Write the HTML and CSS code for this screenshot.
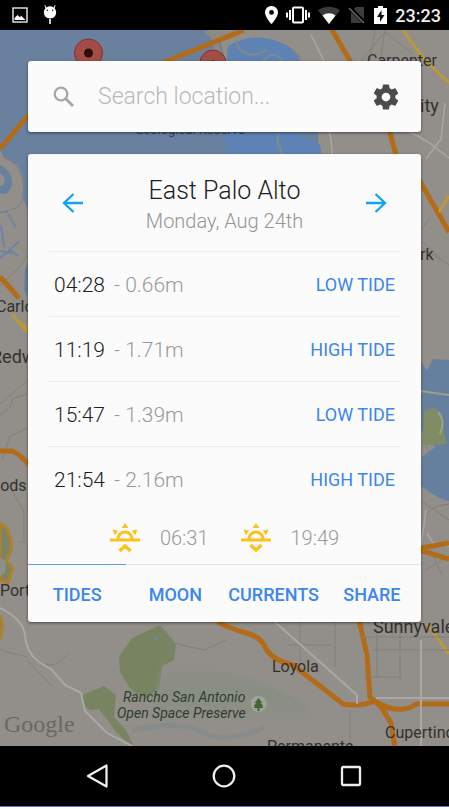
FILE: index.html
```html
<!DOCTYPE html>
<html lang="en">
<head>
<meta charset="utf-8">
<meta name="viewport" content="width=device-width, initial-scale=1">
<title>Tides</title>
<link rel="stylesheet" href="styles.css">
</head>
<body>
<header class="status">
  <div class="status-group status-left">
    <svg width="16" height="16" viewBox="0 0 16 16"><path d="M1 1h14v14H1z" fill="none" stroke="#ddd" stroke-width="1.5"/><path d="M2.500 13v-2l3-3 2 2 2-1 4 4z" fill="#fff"/></svg>
    <svg width="16" height="20" viewBox="0 0 16 20"><path d="M3 0l1.500 2.500a6 6 0 0 1 7 0L13 0l.6.400L12.500 3.300c3.500 4 1 10.200-4.500 10.200S0 7.300 3.500 3.300L2.400.400zM7.200 14h1.600v5H7.200z" fill="#fff"/><circle cx="5.300" cy="5.200" r=".7"/><circle cx="10.700" cy="5.200" r=".7"/></svg>
  </div>
  <div class="status-group status-right">
    <svg width="13" height="18" viewBox="0 0 13 18"><path fill="#fff" fill-rule="evenodd" d="M6.500 0A6.400 6.400 0 0 0 0 6.400C0 11 6.500 18 6.500 18S13 11 13 6.400A6.400 6.400 0 0 0 6.500 0zm0 4a2.400 2.400 0 1 1 0 4.800 2.400 2.400 0 0 1 0-4.800z"/></svg>
    <svg width="24" height="18" viewBox="0 0 24 18" fill="none" stroke="#fff" stroke-width="2"><rect x="7" y="1.500" width="10" height="15" rx="1"/><path d="M4 4v10M20 4v10M1 6.500v5M23 6.500v5"/></svg>
    <svg width="22" height="18" viewBox="0 0 22 18"><path d="M11 18L0 4.500C6-.5 16-.5 22 4.500z" fill="#3a3a3a"/><path d="M11 18L4.500 9.500c4-3 9-3 13 0z" fill="#fff"/></svg>
    <svg width="18" height="18" viewBox="0 0 18 18"><path d="M8 1h8v16H3V6z" fill="#3c3c3c"/><path d="M1 1l16 16" stroke="#000" stroke-width="4"/><path d="M1 2l15 15" stroke="#666" stroke-width="1.500"/></svg>
    <svg width="13" height="18" viewBox="0 0 13 18"><path d="M0 2h4V0h5v2h4v16H0z" fill="#fff"/><path d="M7.500 4L3 11h3v5l4.500-7h-3z" fill="#111"/></svg>
    <time class="clock">23:23</time>
  </div>
</header>

<main class="stage">
  <svg class="map" viewBox="0 30 449 716" preserveAspectRatio="xMidYMid slice" aria-hidden="true">
    <defs>
      <linearGradient id="hill" x1="0" y1="0" x2="0" y2="1"><stop offset="0" stop-color="#7f8f80" stop-opacity="0"/><stop offset=".5" stop-color="#7f8f80" stop-opacity=".5"/><stop offset="1" stop-color="#7f8f80" stop-opacity="0"/></linearGradient>
    </defs>
    <rect y="30" width="449" height="716" fill="#928e89"/>
    <path fill="#69809f" d="M0 30h207l13 10 8 32v60h90v24H28v54l-6-14q4-22-6-32L4 158l-4-8z"/>
    <path fill="#5f82b4" d="M228 46q20-12 42-7 32 8 30 28H226zM226 132h64l30 12 2 14H226z"/>
    <path fill="none" stroke="#7d8c8b" stroke-width="2" d="M236 40q2 12 12 14t18-4M262 62q12-14 20-1M278 134v10l5 12"/>
    <path fill="#8d8b7f" d="M204 31h34l-10 9-10 2 5 14-8 2-3-18z"/>
    <path fill="#68809f" d="M0 165q13 6 12 20-4 12-12 8v-7q7-2 4-9l-4-4zM28 262v36l-4-8 1-20z"/>
    <g fill="none" stroke="#6b84a8" stroke-width="2"><path d="M0 212h8M1 225l3 22M8 214l8 14M0 258l10-8 9-9M0 251l13 2M10 250l8 6"/></g>
    <g fill="none" stroke="#827f7a"><path d="M4 156q19 12 20 30t-8 22l-14 4M0 285l20-18 8-13M0 404l28-24M0 415q14-8 12-16l15-5M2 460l8-24 18-8M12 490l12 22v30h-5M290 50l12 8M360 62l25-30 28 22M370 60l5-30M380 62l5-32M420 210q-8 20-2 28l22 20M430 218l-18 24M418 245l31 20M420 500l29 20M423 440l16 34 10 6M425 570l24-14M430 550l12 25M425 520q0-14 24-16"/></g>
    <g fill="none" stroke="#aaa7a3" stroke-width="1.500"><path d="M311 35l13 26M330 132l3 28M390 120l38 22 21 16M445 103l-4 36-15 20M449 546l-16-3-6-10M415 590l11-80M420 500l-3 70"/></g>
    <path fill="none" stroke="#b36b17" stroke-width="5" d="M150 68l94-38M31 112L0 149M331 28l22 38M389 130l8 28M418 178l31 54M0 277l19 21M0 451h12q10 4 19 17"/>
    <path fill="none" stroke="#b36b17" stroke-width="5" d="M449 543l-33 6 33 10M218 622q8 5 28 11 16 4 20 16 8 12 27 16l50 39q18 3 31-3l15 7q18 4 27-4h40l8 2M359 620l8 35 3 42 11 10 10 16 4 25"/>
    <path fill="none" stroke="#ba9a38" stroke-width="3" d="M403 30l20 28 26 25M449 196l-10 16M12 314l15 18M16 320l12 8M427 624l22 30"/>
    <path fill="#65809e" d="M421 361l6 10 6-12 16 1v86l-12 3-17-20z"/>
    <path fill="#7f8c65" d="M424 412q12-10 18 5l4 27-24 1z"/>
    <path fill="none" stroke="#9ba185" stroke-width="2" d="M420 391l29 4M438 412q8 9 2 22M421 482q9-14 15-3l13 19"/>
    <path fill="#65809e" d="M422 457l16-12 11 1v55l-10-3-18-12z"/>
    <path fill="#7c8368" stroke="#ac8326" stroke-width="3" d="M0 523q13 8 11 28l-5 10 7 7-5 15-8-3zM0 615l3 10-3 14"/>
    <path fill="#8f8e88" d="M0 558l6 3-1 12-5 3z"/>
    <path fill="#788461" d="M132 638l28-13 7 8 9 12-2 15-12 6-3 22-12 10q-12-4-17-10l-10-16-1-15zM83 695l21-9 12 9-2 22 12 13 8 16q-15-8-25-24l-10-13-9 1-8-5z"/>
    <circle cx="156" cy="638" r="2" fill="#6986a2"/>
    <path fill="url(#hill)" d="M160 660q50 0 105 24t45 35q-50 12-160 2z"/>
    <path fill="none" stroke="#827f7a" d="M0 650l27 7M45 664q10 5 23-10M27 660l25 26M162 630l15 14 27 6 22-10M300 622v42M335 622v46M287 645h45M364 677h38M377 620v58M400 620v60M360 637h89M373 650h76M350 710v36"/>
    <path fill="none" stroke="#aaa8a4" stroke-width="2" d="M0 608q24 12 25 28t14 26l13 8 13 15 16 8 4 18 22 22 27 14M275 622l82 73v9M376 698h73M421 640v106"/>
    <path fill="none" stroke="#78878a" opacity=".4" stroke-width="5" d="M132 730q50-10 70 2t62-4"/>
    <g stroke="#82322b" fill="#a44c46"><circle cx="88.500" cy="53" r="14"/><circle cx="213" cy="63" r="13"/></g>
    <circle cx="88.500" cy="53" r="4.500" fill="#2c0d0c"/><circle cx="213" cy="62" r="2" fill="#6c241f"/>
    <g class="place">
      <text x="367" y="66">Carpenter</text>
      <text x="420" y="112" class="place-city">ity</text>
      <text x="136" y="134" class="place-small">Ecological Reserve</text>
      <text x="420" y="260">rk</text>
      <text x="-4" y="312">Carlo</text>
      <text x="-9" y="363" class="place-city">Redw</text>
      <text x="-9" y="491">oods</text>
      <text x="0" y="596">Port</text>
      <text x="373" y="633" class="place-city">Sunnyvale</text>
      <text x="272" y="672">Loyola</text>
      <text x="385" y="738">Cupertino</text>
      <text x="267" y="752">Permanente</text>
    </g>
    <g class="park"><text x="123" y="702">Rancho San Antonio</text><text x="117" y="718">Open Space Preserve</text></g>
    <circle cx="258.500" cy="704" r="8" fill="#a0a39a"/>
    <path fill="#456434" d="M258.500 698l4 5h-2l3 3h-2l2 2h-4v3h-2v-3h-4l2-2h-2l3-3h-2z"/>
    <text x="4" y="732" class="brand">Google</text>
  </svg>

  <div class="panels">
    <form class="card search">
      <label class="search-label" for="location" aria-label="Search location"><svg width="22" height="22" viewBox="0 0 22 22" fill="none" stroke="#a6a6a6"><circle cx="8" cy="8" r="6.300" stroke-width="2.300"/><path d="M12.500 12.500l7.500 7.500" stroke-width="2.800"/></svg></label>
      <input id="location" class="search-input" type="text" placeholder="Search location...">
      <button class="icon-button" type="button" aria-label="Settings"><svg width="30" height="30" viewBox="0 0 24 24"><path fill="#4b4b4b" d="M19.430 12.980c.04-.32.07-.64.07-.98s-.03-.66-.07-.98l2.110-1.650c.19-.15.24-.42.12-.64l-2-3.460c-.12-.22-.39-.3-.61-.22l-2.490 1c-.52-.4-1.080-.73-1.690-.98l-.38-2.650A.488.488 0 0 0 14 2h-4c-.25 0-.46.18-.49.42l-.38 2.650c-.61.25-1.170.59-1.690.98l-2.490-1c-.23-.09-.49 0-.61.22l-2 3.460c-.13.22-.07.49.12.64l2.110 1.650c-.04.32-.07.65-.07.98s.03.66.07.98l-2.110 1.650c-.19.15-.24.42-.12.64l2 3.460c.12.22.39.3.61.22l2.490-1c.52.4 1.080.73 1.690.98l.38 2.650c.03.24.24.42.49.42h4c.25 0 .46-.18.49-.42l.38-2.650c.61-.25 1.170-.59 1.690-.98l2.490 1c.23.09.49 0 .61-.22l2-3.460c.12-.22.07-.49-.12-.64l-2.110-1.650zM12 15.500a3.500 3.500 0 1 1 0-7 3.500 3.500 0 0 1 0 7z"/></svg></button>
    </form>

    <section class="card tides">
      <header class="place-header">
        <button class="icon-button" type="button" aria-label="Previous day"><svg width="22" height="20" viewBox="0 0 22 20" fill="none" stroke="#0da5f2" stroke-width="2.300"><path d="M21 10H2M11.500 1L2 10l9.500 9"/></svg></button>
        <div class="heading">
          <h1>East Palo Alto</h1>
          <p>Monday, Aug 24th</p>
        </div>
        <button class="icon-button" type="button" aria-label="Next day"><svg width="22" height="20" viewBox="0 0 22 20" fill="none" stroke="#0da5f2" stroke-width="2.300"><path d="M1 10h19M10.500 1l9.500 9-9.500 9"/></svg></button>
      </header>
      <ul class="tide-list">
        <li><time>04:28</time><span class="height">- 0.66m</span><span class="kind">LOW TIDE</span></li>
        <li><time>11:19</time><span class="height">- 1.71m</span><span class="kind">HIGH TIDE</span></li>
        <li><time>15:47</time><span class="height">- 1.39m</span><span class="kind">LOW TIDE</span></li>
        <li><time>21:54</time><span class="height">- 2.16m</span><span class="kind">HIGH TIDE</span></li>
      </ul>
      <div class="sun">
        <svg width="30" height="30" viewBox="0 0 30 30"><g fill="#fcc21b"><path d="M15 0l3.500 5h-7zM2.500 6.500l5.500 1-3 5zM27.500 6.500l-5.500 1 3 5z"/></g><g fill="none" stroke="#fcc21b" stroke-width="3"><path d="M0 17h30M8 16a7 7 0 0 1 14 0"/><path d="M9.500 28l5.500-5 5.500 5" stroke-width="3.500"/></g></svg>
        <time>06:31</time>
        <svg class="sunset" width="30" height="30" viewBox="0 0 30 30"><g fill="#fcc21b"><path d="M15 0l3.500 5h-7zM2.500 6.500l5.500 1-3 5zM27.500 6.500l-5.500 1 3 5z"/></g><g fill="none" stroke="#fcc21b" stroke-width="3"><path d="M0 17h30M8 16a7 7 0 0 1 14 0"/><path d="M9.500 22l5.500 5 5.500-5" stroke-width="3.500"/></g></svg>
        <time>19:49</time>
      </div>
      <nav class="tabs">
        <a class="active" href="#tides">TIDES</a>
        <a href="#moon">MOON</a>
        <a href="#currents">CURRENTS</a>
        <a href="#share">SHARE</a>
      </nav>
    </section>
  </div>
</main>

<footer class="system-nav">
  <button type="button" aria-label="Back"><svg width="24" height="24" viewBox="0 0 24 24"><path d="M20.500 1.500v21L2 12z"/></svg></button>
  <button type="button" aria-label="Home"><svg width="24" height="24" viewBox="0 0 24 24"><circle cx="12" cy="12" r="10.300"/></svg></button>
  <button type="button" aria-label="Recent apps"><svg width="24" height="24" viewBox="0 0 24 24"><rect x="3" y="3" width="18" height="18" rx="1"/></svg></button>
</footer>
</body>
</html>
```
FILE: styles.css
```css
* {
  box-sizing: border-box;
}

body {
  margin: 0;
  min-height: 100vh;
  display: flex;
  flex-direction: column;
  background: #fff;
  font-family: Roboto, sans-serif;
  font-weight: 300;
}

h1,
p,
ul {
  margin: 0;
  padding: 0;
  font-weight: 300;
}

svg {
  display: block;
}

button {
  padding: 0;
  border: 0;
  background: none;
}

.status {
  height: 30px;
  padding: 0 8px 0 12px;
  display: flex;
  align-items: center;
  justify-content: space-between;
  background: #000;
}

.status-group {
  display: flex;
  align-items: center;
}

.status-left {
  gap: 14px;
}

.status-right {
  gap: 8px;
}

.clock {
  color: #eee;
  font-size: 18px;
  font-weight: 500;
}

.stage {
  position: relative;
  flex: 1;
  padding: 31px 28px 124px;
  overflow: hidden;
}

.map {
  position: absolute;
  inset: 0;
  width: 100%;
  height: 100%;
}

.place {
  fill: #33312f;
  font-size: 16px;
  font-weight: 400;
}

.place-city {
  font-size: 18px;
}

.place-small {
  font-size: 13px;
  fill: #34445a;
}

.park {
  fill: #2f3d2d;
  font-size: 14px;
  font-style: italic;
  font-weight: 400;
}

.brand {
  fill: #6a6864;
  font-family: "Liberation Serif", serif;
  font-size: 24px;
  font-weight: 400;
}

.panels {
  position: relative;
  display: flex;
  flex-direction: column;
  gap: 22px;
}

.card {
  border-radius: 3px;
  background: #fbfbfb;
  box-shadow: 0 1px 3px rgba(0, 0, 0, 0.5);
}

.search {
  height: 71px;
  padding: 0 20px 0 25px;
  display: flex;
  align-items: center;
}

.search-input {
  flex: 1;
  min-width: 0;
  margin-left: 23px;
  padding: 0;
  border: 0;
  outline: 0;
  background: none;
  font: inherit;
  font-size: 23px;
}

.search-input::placeholder {
  color: #b9b9b9;
  opacity: 1;
}

.place-header {
  height: 97px;
  margin: 0 22px;
  padding: 0 12px;
  display: flex;
  align-items: center;
  justify-content: space-between;
}

.heading {
  text-align: center;
  padding-top: 4px;
}

.heading h1 {
  color: #1d1d1d;
  font-size: 25px;
  line-height: 32px;
}

.heading p {
  color: #959595;
  font-size: 20px;
  line-height: 28px;
}

.tide-list {
  margin: 0 21px;
  list-style: none;
}

.tide-list li {
  height: 65px;
  padding: 1px 5px 0;
  display: flex;
  align-items: center;
  border-top: 1px solid #ececec;
  color: #1d1d1d;
  font-size: 21px;
}

.tide-list .height {
  margin-left: 9px;
  color: #999;
}

.tide-list .kind {
  margin-left: auto;
  color: #3b86f0;
  font-size: 18px;
  font-weight: 400;
}

.sun {
  height: 53px;
  display: flex;
  align-items: center;
  justify-content: center;
  gap: 20px;
  color: #999;
  font-size: 20px;
}

.sunset {
  margin-left: 12px;
}

.tabs {
  display: grid;
  grid-template-columns: repeat(4, 1fr);
  border-top: 1px solid #e6e6e6;
}

.tabs a {
  height: 57px;
  padding-top: 2px;
  display: flex;
  align-items: center;
  justify-content: center;
  color: #3b86f0;
  font-size: 18px;
  font-weight: 500;
  text-decoration: none;
}

.tabs .active {
  box-shadow: 0 -1px #5f9cf4;
}

.system-nav {
  height: 61px;
  padding: 0 35px;
  display: grid;
  grid-template-columns: repeat(3, 1fr);
  background: #000;
  border-bottom: 1px solid #5a74d8;
  margin-bottom: 2px;
}

.system-nav button {
  display: grid;
  place-items: center;
}

.system-nav svg {
  fill: none;
  stroke: #eee;
  stroke-width: 2.3;
  stroke-linejoin: round;
}
```
